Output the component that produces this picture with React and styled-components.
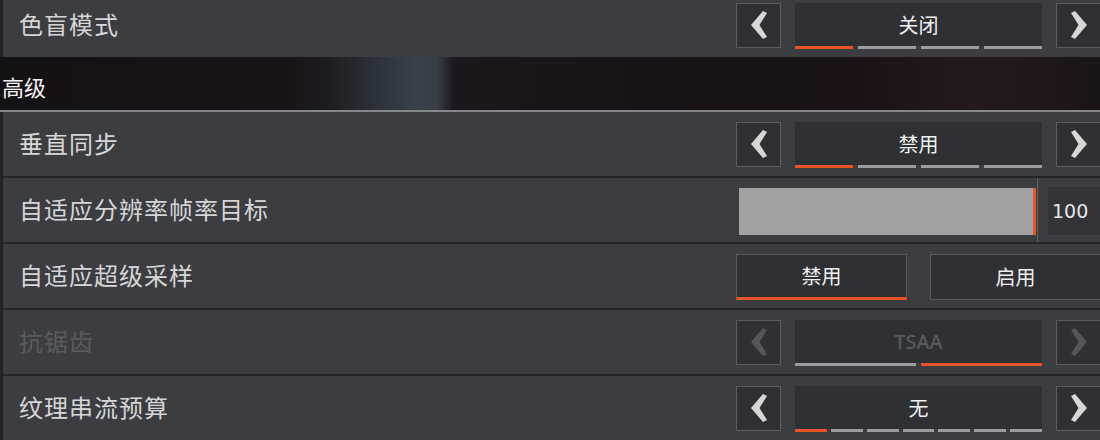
import styled, { createGlobalStyle } from "styled-components"

const Global = createGlobalStyle`
  html, body {
    margin: 0;
    padding: 0;
    background: #232427;
    overflow: hidden;
  }
  body {
    font-family: "Noto Sans CJK SC", "Noto Sans", sans-serif;
  }
`

const Page = styled.div`
  width: 1100px;
  height: 440px;
  overflow: hidden;
  background: #232427;
`

const List = styled.div`
  display: flex;
  flex-direction: column;
  gap: 2px;
  margin-top: -7px;
  width: 1106px;
`

const Row = styled.div`
  display: grid;
  grid-template-columns: 733px 1fr;
  align-items: center;
  height: 64px;
  margin-left: 3px;
  background: #3c3d41;
`

const Label = styled.div`
  padding-left: 16px;
  margin-top: -4px;
  font-size: 24px;
  letter-spacing: 1px;
  color: ${(p) => (p.disabled ? "#5a5b5f" : "#d6d6d6")};
`

const Header = styled.div`
  display: flex;
  align-items: center;
  box-sizing: border-box;
  height: 55px;
  margin: -2px 0 -2px;
  padding: 4px 0 0 2px;
  font-size: 22px;
  color: #f2f2f2;
  border-bottom: 2px solid #85868a;
  background: linear-gradient(
    90deg,
    #141114 0%,
    #181316 26%,
    #1f1d22 30%,
    #2c313a 34%,
    #39414b 37.5%,
    #383f49 39.5%,
    #1c171a 41%,
    #171215 60%,
    #1a1216 78%,
    #241a1e 88%,
    #1a1417 100%
  );
`

const Controls = styled.div`
  display: flex;
  align-items: flex-start;
  margin-top: 1px;
`

const ArrowBox = styled.div`
  width: 45px;
  height: 45px;
  box-sizing: border-box;
  border: 1px solid #5b5c60;
  background: #2f3034;
  display: flex;
  align-items: center;
  justify-content: center;
  flex-shrink: 0;
  svg {
    fill: ${(p) => (p.disabled ? "#55565a" : "#d6d6d6")};
  }
`

const Selector = styled.div`
  width: 247px;
  margin: 0 14px;
  display: flex;
  flex-direction: column;
`

const Value = styled.div`
  height: 43px;
  background: #2f3034;
  display: flex;
  align-items: center;
  justify-content: center;
  font-family: ${(p) => (p.latin ? '"Noto Sans", sans-serif' : "inherit")};
  font-weight: ${(p) => (p.latin ? 500 : 400)};
  font-size: 20px;
  color: ${(p) => (p.disabled ? "#5a5b5f" : "#f0f0f0")};
`

const Bars = styled.div`
  display: flex;
  gap: ${(p) => p.gap}px;
  height: 3px;
`

const Bar = styled.div`
  flex: 1;
  background: ${(p) => (p.active ? "#e8532a" : "#9b9c9e")};
`

const SliderWrap = styled.div`
  display: flex;
  align-items: center;
  height: 64px;
`

const Track = styled.div`
  width: 297px;
  height: 47px;
  margin-left: 3px;
  margin-top: 3px;
  background: #a2a2a3;
  position: relative;
  &::after {
    content: "";
    position: absolute;
    right: 0;
    top: 0;
    bottom: 0;
    width: 3px;
    background: #e8532a;
  }
`

const Divider = styled.div`
  width: 1px;
  align-self: stretch;
  margin-left: 1px;
  background: #5c6268;
`

const Number = styled.div`
  width: 58px;
  height: 48px;
  margin-left: 10px;
  margin-top: 2px;
  background: #333438;
  display: flex;
  align-items: center;
  padding-left: 4px;
  box-sizing: border-box;
  font-family: "DejaVu Sans", sans-serif;
  font-size: 19px;
  color: #e6e6e6;
`

const Toggle = styled.div`
  display: flex;
  gap: 23px;
  margin-top: 1px;
`

const Option = styled.div`
  width: 171px;
  height: 46px;
  box-sizing: border-box;
  border: 1px solid #58595d;
  border-bottom: ${(p) => (p.active ? "3px solid #e8532a" : "1px solid #58595d")};
  background: #2f3034;
  display: flex;
  align-items: center;
  justify-content: center;
  font-size: 20px;
  color: #eeeeee;
`

const Chevron = ({ right }) => (
  <svg width="16" height="28" viewBox="0 0 16 28" style={right ? { transform: "scaleX(-1)" } : undefined}>
    <polygon points="16,2 12,0 0,14 12,28 16,26 8.5,14" />
  </svg>
)

const Select = ({ value, count, index, disabled, latin }) => {
  const gap = count > 4 ? 4 : 5
  return (
    <Controls>
      <ArrowBox disabled={disabled}>
        <Chevron />
      </ArrowBox>
      <Selector>
        <Value disabled={disabled} latin={latin}>{value}</Value>
        <Bars gap={gap}>
          {Array.from({ length: count }).map((_, i) => (
            <Bar key={i} active={i === index} />
          ))}
        </Bars>
      </Selector>
      <ArrowBox disabled={disabled}>
        <Chevron right />
      </ArrowBox>
    </Controls>
  )
}

export default function App() {
  return (
    <Page>
      <Global />
      <List>
        <Row>
          <Label>色盲模式</Label>
          <Select value="关闭" count={4} index={0} />
        </Row>
        <Header>高级</Header>
        <Row>
          <Label>垂直同步</Label>
          <Select value="禁用" count={4} index={0} />
        </Row>
        <Row>
          <Label>自适应分辨率帧率目标</Label>
          <SliderWrap>
            <Track />
            <Divider />
            <Number>100</Number>
          </SliderWrap>
        </Row>
        <Row>
          <Label>自适应超级采样</Label>
          <Toggle>
            <Option active>禁用</Option>
            <Option>启用</Option>
          </Toggle>
        </Row>
        <Row>
          <Label disabled>抗锯齿</Label>
          <Select value="TSAA" count={2} index={1} disabled latin />
        </Row>
        <Row>
          <Label>纹理串流预算</Label>
          <Select value="无" count={7} index={0} />
        </Row>
      </List>
    </Page>
  )
}
